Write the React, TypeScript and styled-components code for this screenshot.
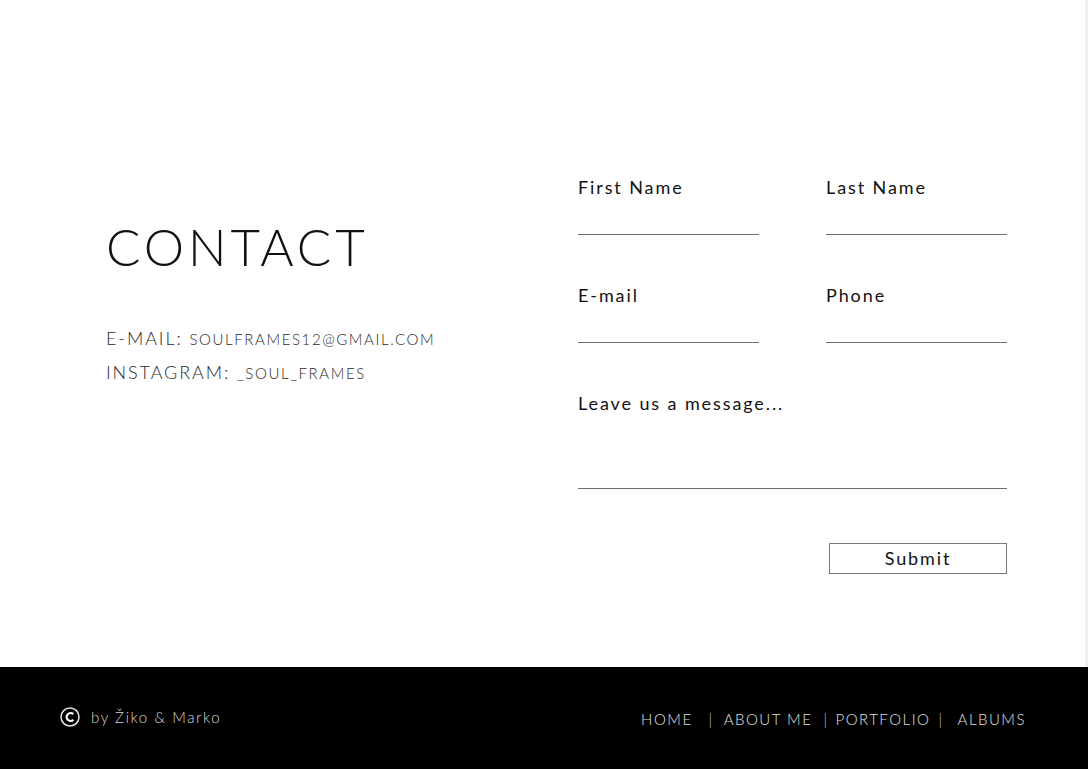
import React from "react";
import styled, { createGlobalStyle } from "styled-components";

const Global = createGlobalStyle`
  html, body { margin: 0; padding: 0; background: #fff; }
  body { font-family: Lato, "Open Sans", sans-serif; color: #111; }
  * { box-sizing: border-box; }
`;

const Page = styled.div`
  width: 1088px;
  min-height: 769px;
  display: flex;
  flex-direction: column;
`;

const Main = styled.main`
  height: 667px;
  display: flex;
  border-right: 3px solid #f0f0f0;
`;

const Info = styled.section`
  width: 578px;
  padding: 216px 0 0 106px;
`;

const Title = styled.h1`
  margin: 0;
  font-family: Lato, sans-serif;
  font-weight: 300;
  font-size: 51px;
  line-height: 62px;
  letter-spacing: 3.9px;
  color: #111;
`;

const Details = styled.div`
  margin-top: 49px;
  display: flex;
  flex-direction: column;
  gap: 11px;
`;

const DetailRow = styled.div`
  font-weight: 300;
  font-size: 18px;
  line-height: 22px;
  letter-spacing: 1.9px;
  color: #2a2a2a;
`;

const DetailValue = styled.span`
  font-size: 15px;
  letter-spacing: 1.6px;
`;

const Form = styled.form`
  width: 429px;
  padding-top: 176px;
  display: grid;
  grid-template-columns: 181px 181px;
  column-gap: 67px;
  row-gap: 49px;
  align-content: start;
`;

const Field = styled.label<{ $wide?: boolean }>`
  display: flex;
  flex-direction: column;
  grid-column: ${(p) => (p.$wide ? "1 / -1" : "auto")};
`;

const LabelText = styled.span`
  font-size: 18px;
  line-height: 22px;
  letter-spacing: 1.9px;
  color: #111;
  font-weight: 400;
`;

const Input = styled.input<{ $h?: number }>`
  height: ${(p) => p.$h ?? 37}px;
  border: none;
  border-bottom: 1px solid #6e6e6e;
  background: transparent;
  outline: none;
  padding: 0;
  font: inherit;
`;

const Actions = styled.div`
  grid-column: 1 / -1;
  display: flex;
  justify-content: flex-end;
  margin-top: 5px;
`;

const Submit = styled.button`
  width: 178px;
  height: 31px;
  background: #fff;
  border: 1px solid #7a7a7a;
  font-family: Lato, sans-serif;
  font-size: 18px;
  line-height: 20px;
  letter-spacing: 1.9px;
  color: #111;
  padding: 0 0 2px;
  cursor: pointer;
`;

const Footer = styled.footer`
  height: 102px;
  background: #000;
  display: flex;
  align-items: center;
  justify-content: space-between;
  padding: 0 62px 0 60px;
`;

const Credit = styled.div`
  display: flex;
  align-items: center;
  gap: 11px;
  font-weight: 300;
  font-size: 15px;
  letter-spacing: 1.6px;
  color: #d8d8d8;
  margin-bottom: 2px;
`;

const Nav = styled.nav`
  display: flex;
  align-items: center;
  font-weight: 300;
  font-size: 15px;
  letter-spacing: 1.5px;
  color: #e0e0e0;
  margin-top: 2px;
`;

const NavLink = styled.a`
  color: inherit;
  text-decoration: none;
`;

const Sep = styled.span<{ $l: number; $r: number }>`
  margin: 0 ${(p) => p.$r}px 0 ${(p) => p.$l}px;
  color: #c8c8c8;
`;

const CopyIcon = () => (
  <svg width="20" height="20" viewBox="0 0 20 20" fill="none">
    <circle cx="10" cy="10" r="9" stroke="#e6e6e6" strokeWidth="1.5" />
    <path d="M13.3 7.2A3.9 3.9 0 1 0 13.3 12.8" stroke="#fff" strokeWidth="2.3" strokeLinecap="butt" />
  </svg>
);

export default function App() {
  return (
    <Page>
      <Global />
      <Main>
        <Info>
          <Title>CONTACT</Title>
          <Details>
            <DetailRow>
              E-MAIL: <DetailValue>SOULFRAMES12@GMAIL.COM</DetailValue>
            </DetailRow>
            <DetailRow>
              INSTAGRAM: <DetailValue>_SOUL_FRAMES</DetailValue>
            </DetailRow>
          </Details>
        </Info>
        <Form onSubmit={(e) => e.preventDefault()}>
          <Field>
            <LabelText>First Name</LabelText>
            <Input />
          </Field>
          <Field>
            <LabelText>Last Name</LabelText>
            <Input />
          </Field>
          <Field>
            <LabelText>E-mail</LabelText>
            <Input />
          </Field>
          <Field>
            <LabelText>Phone</LabelText>
            <Input />
          </Field>
          <Field $wide>
            <LabelText>Leave us a message...</LabelText>
            <Input $h={75} />
          </Field>
          <Actions>
            <Submit type="submit">Submit</Submit>
          </Actions>
        </Form>
      </Main>
      <Footer>
        <Credit>
          <CopyIcon />
          <span>by Žiko &amp; Marko</span>
        </Credit>
        <Nav>
          <NavLink href="#">HOME</NavLink>
          <Sep $l={16} $r={10}>|</Sep>
          <NavLink href="#">ABOUT ME</NavLink>
          <Sep $l={11} $r={7}>|</Sep>
          <NavLink href="#">PORTFOLIO</NavLink>
          <Sep $l={8} $r={14}>|</Sep>
          <NavLink href="#">ALBUMS</NavLink>
        </Nav>
      </Footer>
    </Page>
  );
}
